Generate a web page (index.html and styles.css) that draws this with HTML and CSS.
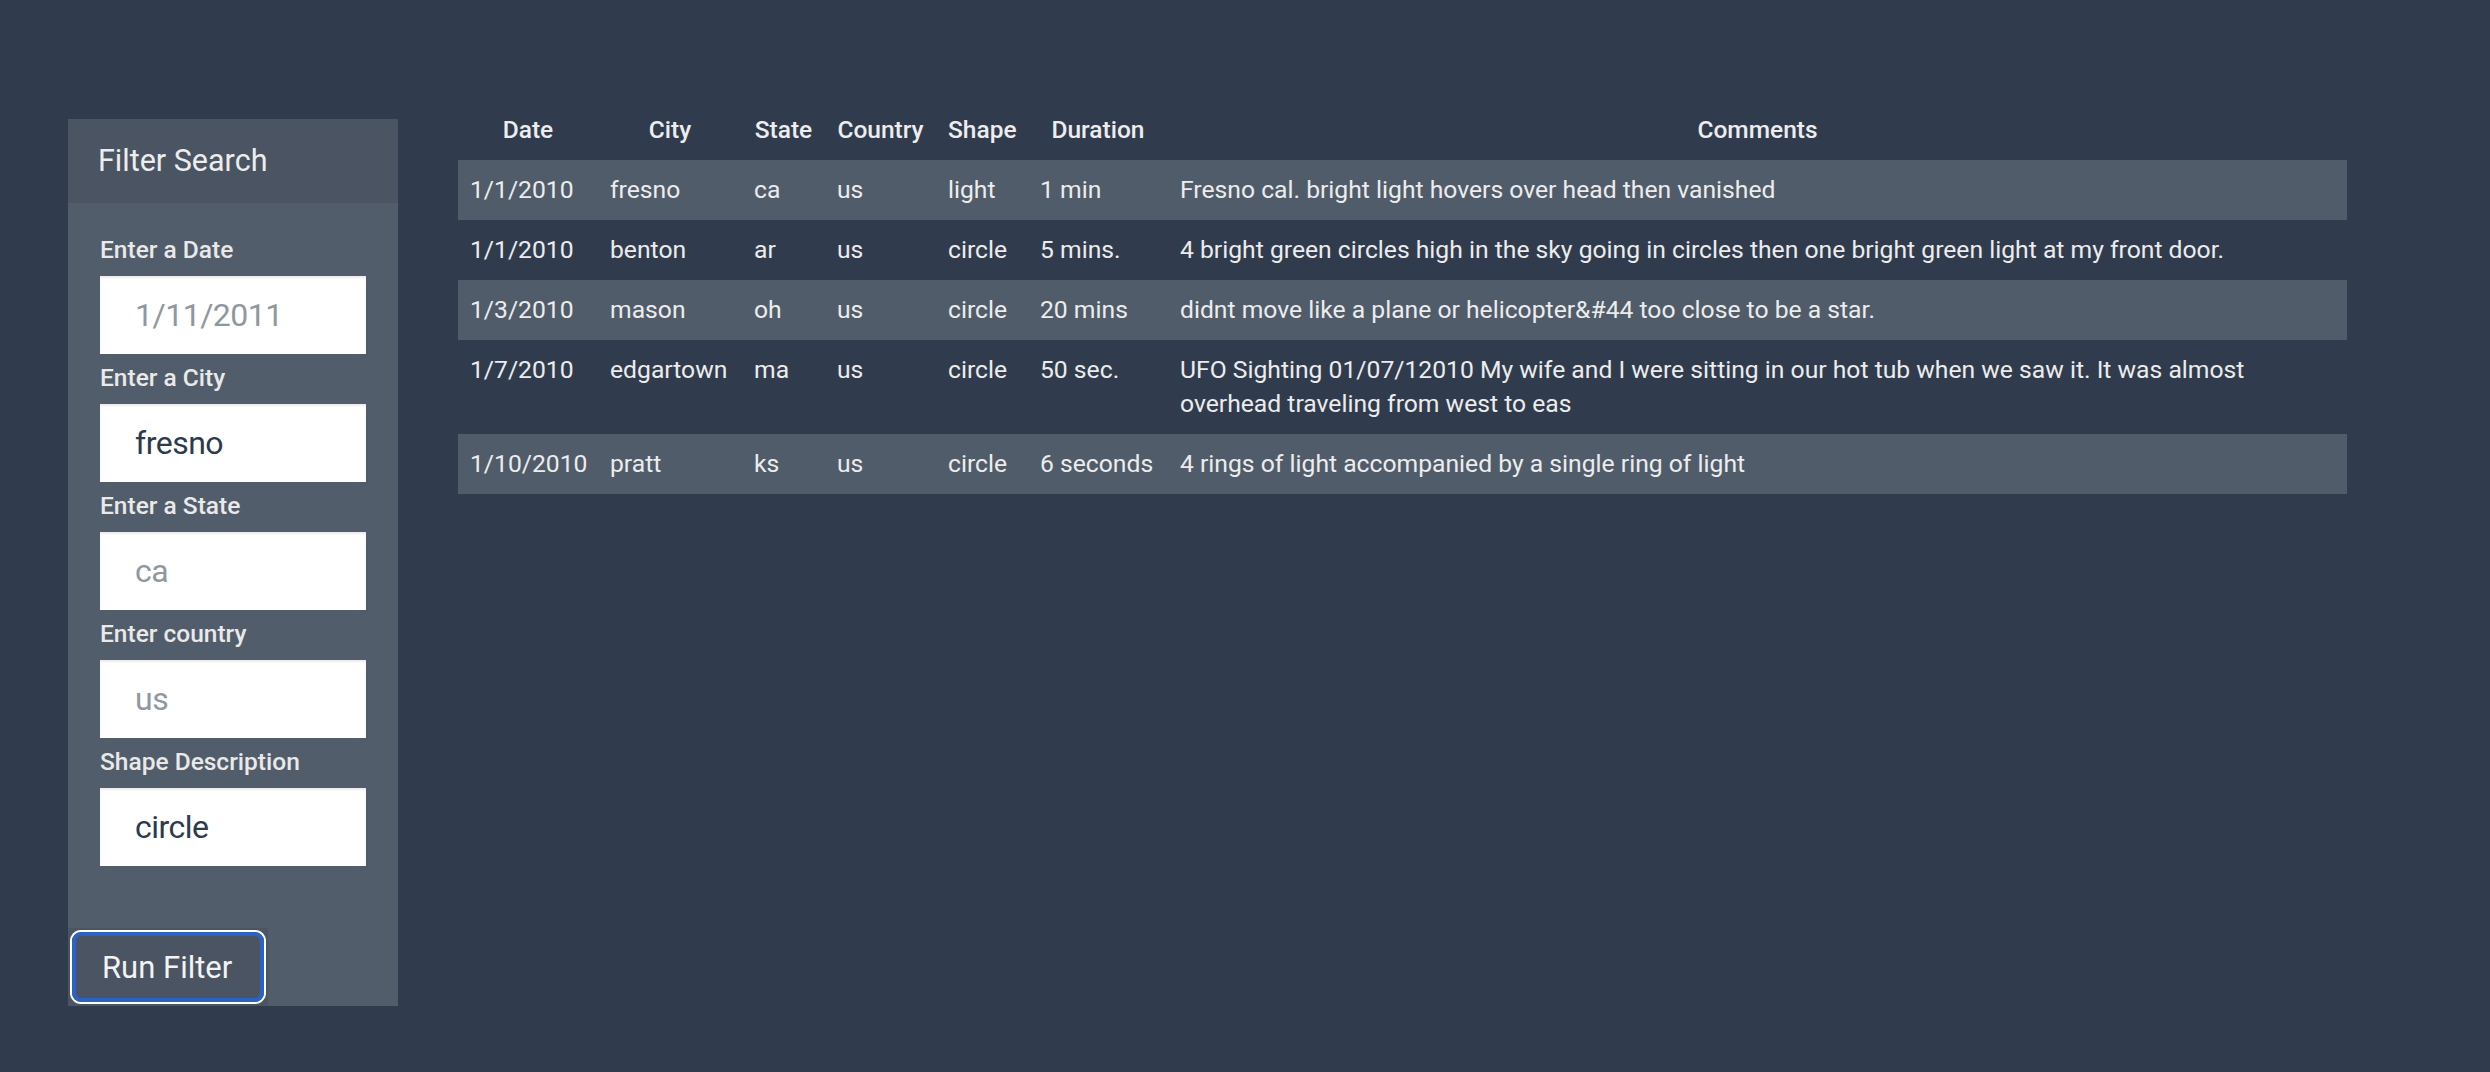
FILE: index.html
```html
<!DOCTYPE html>
<html lang="en">
<head>
<meta charset="utf-8">
<title>UFO Sightings</title>
<link rel="stylesheet" href="styles.css">
</head>
<body>
<div class="page">
  <aside class="sidebar">
    <div class="panel">
      <div class="panel-heading">Filter Search</div>
      <form class="panel-body">
        <div class="field">
          <label class="field-label" for="date">Enter a Date</label>
          <input class="field-input" id="date" type="text" placeholder="1/11/2011">
        </div>
        <div class="field">
          <label class="field-label" for="city">Enter a City</label>
          <input class="field-input" id="city" type="text" value="fresno">
        </div>
        <div class="field">
          <label class="field-label" for="state">Enter a State</label>
          <input class="field-input" id="state" type="text" placeholder="ca">
        </div>
        <div class="field">
          <label class="field-label" for="country">Enter country</label>
          <input class="field-input" id="country" type="text" placeholder="us">
        </div>
        <div class="field">
          <label class="field-label" for="shape">Shape Description</label>
          <input class="field-input" id="shape" type="text" value="circle">
        </div>
      </form>
      <div class="panel-footer">
        <button class="run-btn" type="button"><span class="run-ring">Run Filter</span></button>
      </div>
    </div>
  </aside>
  <main class="results">
    <table class="ufo-table">
      <colgroup>
        <col class="c-date"><col class="c-city"><col class="c-state"><col class="c-country"><col class="c-shape"><col class="c-duration"><col class="c-comments">
      </colgroup>
      <thead>
        <tr><th>Date</th><th>City</th><th>State</th><th>Country</th><th>Shape</th><th>Duration</th><th>Comments</th></tr>
      </thead>
      <tbody>
        <tr><td>1/1/2010</td><td>fresno</td><td>ca</td><td>us</td><td>light</td><td>1 min</td><td>Fresno cal. bright light hovers over head then vanished</td></tr>
        <tr><td>1/1/2010</td><td>benton</td><td>ar</td><td>us</td><td>circle</td><td>5 mins.</td><td>4 bright green circles high in the sky going in circles then one bright green light at my front door.</td></tr>
        <tr><td>1/3/2010</td><td>mason</td><td>oh</td><td>us</td><td>circle</td><td>20 mins</td><td>didnt move like a plane or helicopter&amp;#44 too close to be a star.</td></tr>
        <tr><td>1/7/2010</td><td>edgartown</td><td>ma</td><td>us</td><td>circle</td><td>50 sec.</td><td>UFO Sighting 01/07/12010 My wife and I were sitting in our hot tub when we saw it. It was almost overhead traveling from west to eas</td></tr>
        <tr><td>1/10/2010</td><td>pratt</td><td>ks</td><td>us</td><td>circle</td><td>6 seconds</td><td>4 rings of light accompanied by a single ring of light</td></tr>
      </tbody>
    </table>
  </main>
</div>
</body>
</html>
```
FILE: styles.css
```css
* { box-sizing: border-box; }

html, body {
  margin: 0;
  background: #303c4e;
}

body {
  font-family: Roboto, "Open Sans", sans-serif;
  color: #ececec;
  font-size: 24px;
  line-height: 34px;
}

.page {
  display: flex;
  align-items: flex-start;
  gap: 60px;
  padding: 100px 143px 0 68px;
}

.sidebar {
  flex: 0 0 330px;
  margin-top: 19px;
}

.panel {
  background: #525d6b;
  display: flex;
  flex-direction: column;
}

.panel-heading {
  height: 84px;
  background: #4a5462;
  padding-left: 30px;
  display: flex;
  align-items: center;
  font-size: 30.5px;
  color: #ededed;
}

.panel-body {
  margin: 0;
  padding: 30px 32px 0 32px;
  display: flex;
  flex-direction: column;
  gap: 7px;
}

.field {
  display: flex;
  flex-direction: column;
  gap: 9px;
}

.field-label {
  font-weight: 500;
  font-size: 24.5px;
  line-height: 34px;
  color: #e9e9e9;
}

.field-input {
  width: 266px;
  height: 78px;
  border: none;
  border-radius: 0;
  background: #ffffff;
  box-shadow: inset 0 2px 2px rgba(0, 0, 0, 0.08);
  padding: 0 0 0 35px;
  font-family: Roboto, "Open Sans", sans-serif;
  font-size: 32px;
  letter-spacing: -0.5px;
  color: #2c3a4d;
  outline: none;
}

.field-input::placeholder {
  color: #8f979f;
  opacity: 1;
}

.panel-footer {
  margin-top: 62px;
  display: flex;
}

.run-btn {
  width: 200px;
  height: 78px;
  padding: 4px;
  border: none;
  background: #4a5462;
  font-family: Roboto, "Open Sans", sans-serif;
  display: flex;
  cursor: pointer;
}

.run-ring {
  flex: 1;
  display: flex;
  align-items: center;
  padding-left: 26px;
  border: 4px solid #2a62c6;
  border-radius: 9px;
  box-shadow: 0 0 0 2px #ffffff;
  font-size: 31px;
  color: #f3f3f3;
}

.results {
  flex: 1;
}

.ufo-table {
  width: 100%;
  border-collapse: collapse;
  table-layout: fixed;
  font-size: 24.7px;
}

.c-date { width: 140px; }
.c-city { width: 144px; }
.c-state { width: 83px; }
.c-country { width: 111px; }
.c-shape { width: 92px; }
.c-duration { width: 140px; }

.ufo-table th,
.ufo-table td {
  padding: 13px 12px;
  vertical-align: top;
  text-align: left;
  white-space: normal;
}

.ufo-table th {
  text-align: center;
  font-weight: 500;
  font-size: 24.5px;
  color: #ededed;
}

.ufo-table td {
  color: #ececec;
}

.ufo-table tbody tr:nth-child(odd) {
  background: #515c6b;
}
```
